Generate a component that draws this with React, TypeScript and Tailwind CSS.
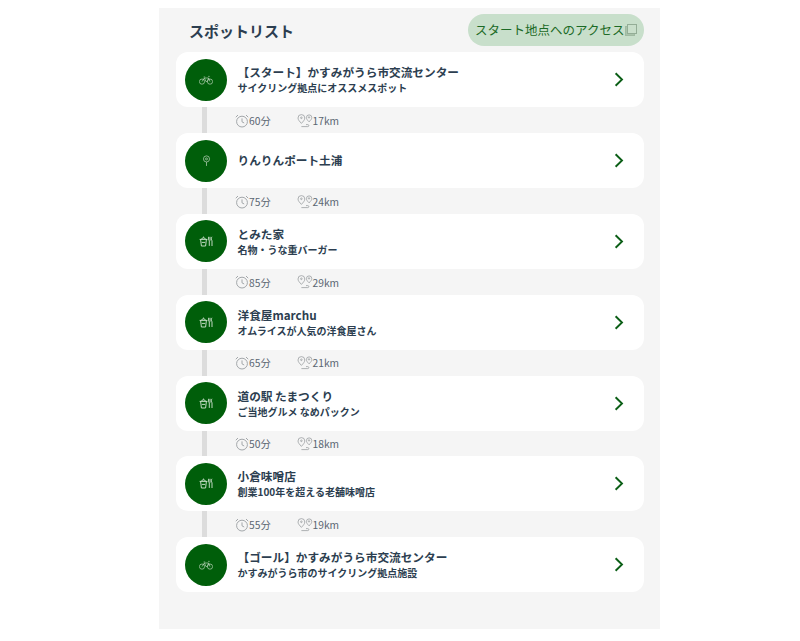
import React from "react";

function Bike() {
  return (
    <svg width="14" height="10" viewBox="0 0 14 10" fill="none" stroke="#b9d2b9" strokeWidth="0.7">
      <circle cx="3" cy="6.6" r="2.6" />
      <circle cx="11" cy="6.6" r="2.6" />
      <path d="M3 6.6 5.4 3h4.2L11 6.6M5.4 3 7 6.6h1.4L9.6 3M9.2 1.4h1.4M4.6 2h1.6" />
    </svg>
  );
}

function Pin() {
  return (
    <svg width="9" height="12" viewBox="0 0 10 13" fill="none" stroke="#b9d2b9" strokeWidth="0.8">
      <circle cx="5" cy="4.2" r="3.4" />
      <circle cx="5" cy="4.2" r="1.1" />
      <path d="M5 7.6v4.4" />
    </svg>
  );
}

function Food() {
  return (
    <svg width="14" height="11" viewBox="0 0 14 11" fill="none" stroke="#d5e5d5" strokeWidth="0.9">
      <path d="M0.6 3.4h7.8M1.6 3.4 2.4 10h4.2L7.4 3.4M2.4 3.2C2.6 1.4 6.4 1.4 6.6 3.2M4.5 0.6v1M2.8 6.4h3.4" />
      <path d="M9.6 0.8v3c0 .8 .7 .9 .7 .9v5.2M11 .8v3.9" />
      <path d="M13 .8c-.9 1-.9 3 0 4v5.2" />
    </svg>
  );
}

function Clock() {
  return (
    <svg width="14" height="14" viewBox="0 0 14 14" fill="none" stroke="#9a9ea1" strokeWidth="0.9" className="shrink-0">
      <circle cx="7" cy="7.6" r="5.4" />
      <path d="M7 4.4v3.4l2.2 1.2M0.8 3.2 3 1M13.2 3.2 11 1" />
    </svg>
  );
}

function Route() {
  return (
    <svg width="16" height="14" viewBox="0 0 16 14" fill="none" stroke="#9a9ea1" strokeWidth="0.8" className="shrink-0">
      <path d="M4.4 9.4C2.6 7.4 1 5.8 1 4a3.4 3.4 0 0 1 6.8 0c0 1.8-1.6 3.4-3.4 5.4Z" />
      <circle cx="4.4" cy="3.8" r="0.8" />
      <path d="M12 7.8C10.6 6.4 9.4 5 9.4 3.6a2.7 2.7 0 0 1 5.4 0c0 1.4-1.2 2.8-2.8 4.2Z" />
      <circle cx="12" cy="3.4" r="0.7" />
      <path d="M4.4 12.6h6.4c1.4 0 1.4-2 0-2H9" />
    </svg>
  );
}

function CopyIcon() {
  return (
    <svg width="12" height="12" viewBox="0 0 12 12" fill="none" className="ml-px shrink-0">
      <rect x="0.5" y="2.5" width="9" height="9" fill="#a9c3ab" stroke="#a0baa2" />
      <rect x="2.5" y="0.5" width="9" height="9" fill="#c9dfcb" stroke="#93ad96" />
    </svg>
  );
}

function Chevron() {
  return (
    <svg width="10" height="15" viewBox="0 0 10 15" fill="none" stroke="#0b5e16" strokeWidth="1.9" className="shrink-0">
      <path d="M1.6 1.2 8 7.5 1.6 13.8" />
    </svg>
  );
}

type Spot = {
  icon: "bike" | "pin" | "food";
  title: string;
  sub?: string;
  time?: string;
  dist?: string;
};

const spots: Spot[] = [
  { icon: "bike", title: "【スタート】かすみがうら市交流センター", sub: "サイクリング拠点にオススメスポット", time: "60分", dist: "17km" },
  { icon: "pin", title: "りんりんポート土浦", time: "75分", dist: "24km" },
  { icon: "food", title: "とみた家", sub: "名物・うな重バーガー", time: "85分", dist: "29km" },
  { icon: "food", title: "洋食屋marchu", sub: "オムライスが人気の洋食屋さん", time: "65分", dist: "21km" },
  { icon: "food", title: "道の駅 たまつくり", sub: "ご当地グルメ なめパックン", time: "50分", dist: "18km" },
  { icon: "food", title: "小倉味噌店", sub: "創業100年を超える老舗味噌店", time: "55分", dist: "19km" },
  { icon: "bike", title: "【ゴール】かすみがうら市交流センター", sub: "かすみがうら市のサイクリング拠点施設" },
];

export default function App() {
  return (
    <div
      className="min-h-[641px] bg-white pt-2"
      style={{ fontFamily: '"Noto Sans CJK JP", "Noto Sans", sans-serif' }}
    >
      <div className="ml-[159px] h-[621px] w-[501px] bg-[#f5f5f5] pl-[17px] pr-4">
        <div className="flex h-[44.4px] items-center justify-between">
          <h2 className="pl-[13px] text-[15px] font-bold leading-none text-[#2c3e50]">スポットリスト</h2>
          <div className="flex h-8 w-[176px] items-center rounded-full bg-[#c8dfcb] pl-[7px] text-[12.5px] leading-none text-[#1c6a26]">
            <span>スタート地点へのアクセス</span>
            <CopyIcon />
          </div>
        </div>
        <div className="flex flex-col">
          {spots.map((s) => (
            <div key={s.title}>
              <div className="flex h-[55px] items-center rounded-xl bg-white pl-[9px] pr-5">
                <div className="flex h-[42px] w-[42px] shrink-0 items-center justify-center rounded-full bg-[#005e0a]">
                  {s.icon === "bike" ? <Bike /> : s.icon === "pin" ? <Pin /> : <Food />}
                </div>
                <div className={s.sub ? "ml-[10.5px] flex min-w-0 flex-1 flex-col justify-center pb-px text-[#2c3e50]" : "ml-[10.5px] flex min-w-0 flex-1 flex-col justify-center pb-[2px] text-[#2c3e50]"}>
                  <div className="text-[11.67px] font-bold leading-[17px]">{s.title}</div>
                  {s.sub && <div className="text-[10px] font-bold leading-[15px]">{s.sub}</div>}
                </div>
                <Chevron />
              </div>
              {s.time && (
                <div className="flex h-[25.8px] items-center pl-[26px]">
                  <div className="h-full w-[5px] shrink-0 bg-[#dcdcdc]" />
                  <div className="ml-[28px] flex w-[61.5px] items-center pt-px text-[10.25px] text-[#5a6672]">
                    <Clock />
                    <span>{s.time}</span>
                  </div>
                  <div className="flex items-center pt-px text-[10.25px] text-[#5a6672]">
                    <Route />
                    <span>{s.dist}</span>
                  </div>
                </div>
              )}
            </div>
          ))}
        </div>
      </div>
    </div>
  );
}
